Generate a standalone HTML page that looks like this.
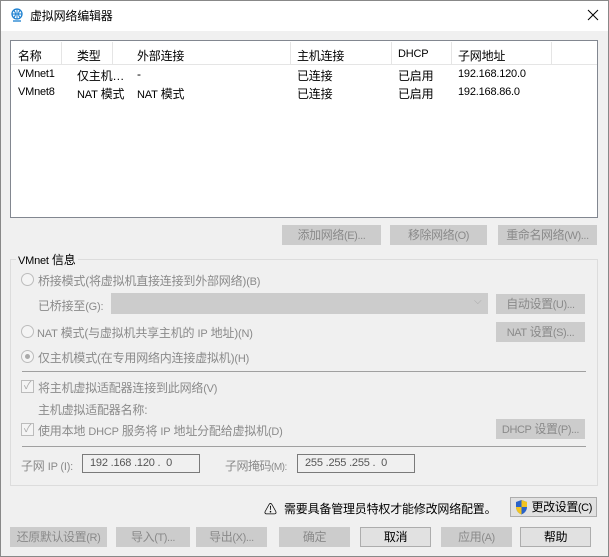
<!DOCTYPE html>
<html><head><meta charset="utf-8"><style>
*{box-sizing:border-box}
body{margin:0;width:609px;height:557px;overflow:hidden;background:#f0f0f0;font-family:"Liberation Sans","Noto Sans CJK SC",sans-serif;font-size:12px;color:#000;position:relative;letter-spacing:-0.2px}
.a{position:absolute;white-space:nowrap}
.win{position:absolute;left:0;top:0;width:609px;height:557px;border:1px solid #888}
.title{position:absolute;left:1px;top:1px;width:607px;height:30px;background:#fff}
.btn{position:absolute;height:20px;border:1px solid #ccc;background:#ccc;color:#8a8a8a;text-align:center;line-height:18px;white-space:nowrap;overflow:hidden;letter-spacing:-0.4px}
.btn.on{border:1px solid #adadad;background:#e1e1e1;color:#000}
.g{color:#8a8a8a}
.l{font-size:11px}
.radio{position:absolute;width:13px;height:13px;border:1px solid #bcbcbc;border-radius:50%;background:#f4f4f4}
.chk{position:absolute;width:13px;height:13px;border:1px solid #bcbcbc;background:#f4f4f4;color:#aaa;font-size:11px;line-height:11px;text-align:center}
</style></head><body>
<div class="win"></div>
<div class="title"></div>
<svg class="a" style="left:10px;top:8px" width="14" height="14" viewBox="0 0 14 14"><circle cx="7" cy="6" r="5" fill="none" stroke="#1a7fd0" stroke-width="1.3"/><path d="M2 6h10M7 1v10M4 2.5q3 3.5 0 7M10 2.5q-3 3.5 0 7" stroke="#1a7fd0" fill="none"/><path d="M3 13h8" stroke="#1a7fd0" stroke-width="1.3"/></svg>
<div class="a" style="left:30px;top:7px">虚拟网络编辑器</div>
<svg class="a" style="left:587px;top:9px" width="12" height="12" viewBox="0 0 12 12"><path d="M1 1L11 11M11 1L1 11" stroke="#000" stroke-width="1"/></svg>

<div class="a" style="left:10px;top:40px;width:588px;height:178px;background:#fff;border:1px solid #828790"></div>
<div class="a" style="left:11px;top:41px;width:586px;height:24px;border-bottom:1px solid #e5e5e5"></div>
<div class="a" style="left:61px;top:42px;width:1px;height:22px;background:#e5e5e5"></div>
<div class="a" style="left:112px;top:42px;width:1px;height:22px;background:#e5e5e5"></div>
<div class="a" style="left:290px;top:42px;width:1px;height:22px;background:#e5e5e5"></div>
<div class="a" style="left:391px;top:42px;width:1px;height:22px;background:#e5e5e5"></div>
<div class="a" style="left:451px;top:42px;width:1px;height:22px;background:#e5e5e5"></div>
<div class="a" style="left:551px;top:42px;width:1px;height:22px;background:#e5e5e5"></div>
<div class="a" style="left:18px;top:47px">名称</div><div class="a" style="left:77px;top:47px">类型</div><div class="a" style="left:137px;top:47px">外部连接</div><div class="a" style="left:297px;top:47px">主机连接</div><div class="a" style="left:398px;top:48px;font-size:11px">DHCP</div><div class="a" style="left:458px;top:47px">子网地址</div>
<div class="a" style="left:18px;top:68px;font-size:11px">VMnet1</div><div class="a" style="left:77px;top:67px">仅主机…</div><div class="a" style="left:137px;top:67px">-</div><div class="a" style="left:297px;top:67px">已连接</div><div class="a" style="left:398px;top:67px">已启用</div><div class="a" style="left:458px;top:68px;font-size:11px">192.168.120.0</div>
<div class="a" style="left:18px;top:86px;font-size:11px">VMnet8</div><div class="a" style="left:77px;top:85px"><span class="l">NAT</span> 模式</div><div class="a" style="left:137px;top:85px"><span class="l">NAT</span> 模式</div><div class="a" style="left:297px;top:85px">已连接</div><div class="a" style="left:398px;top:85px">已启用</div><div class="a" style="left:458px;top:86px;font-size:11px">192.168.86.0</div>

<div class="btn" style="left:282px;top:225px;width:99px">添加网络<span class="l">(E)...</span></div>
<div class="btn" style="left:390px;top:225px;width:97px">移除网络<span class="l">(O)</span></div>
<div class="btn" style="left:498px;top:225px;width:99px">重命名网络<span class="l">(W)...</span></div>

<div class="a" style="left:10px;top:259px;width:588px;height:227px;border:1px solid #dcdcdc"></div>
<div class="a" style="left:16px;top:251px;background:#f0f0f0;padding:0 2px"><span class="l">VMnet</span> 信息</div>
<div class="radio" style="left:21px;top:273px"></div><div class="a g" style="left:38px;top:272px">桥接模式(将虚拟机直接连接到外部网络)<span class="l">(B)</span></div>
<div class="a g" style="left:38px;top:297px">已桥接至<span class="l">(G):</span></div>
<div class="a" style="left:111px;top:293px;width:377px;height:21px;background:#ccc;border:1px solid #ccc"></div>
<div class="a" style="left:474px;top:296px;color:#aaa;font-size:10px">⌵</div>
<div class="btn" style="left:496px;top:294px;width:89px">自动设置<span class="l">(U)...</span></div>
<div class="radio" style="left:21px;top:325px"></div><div class="a g" style="left:37px;top:324px"><span class="l">NAT</span> 模式(与虚拟机共享主机的 <span class="l">IP</span> 地址)<span class="l">(N)</span></div>
<div class="btn" style="left:496px;top:322px;width:89px"><span class="l">NAT</span> 设置<span class="l">(S)...</span></div>
<div class="radio" style="left:21px;top:350px"></div><div class="a" style="left:25px;top:354px;width:5px;height:5px;border-radius:50%;background:#aaa"></div>
<div class="a g" style="left:38px;top:349px">仅主机模式(在专用网络内连接虚拟机)<span class="l">(H)</span></div>
<div class="a" style="left:22px;top:371px;width:564px;height:1px;background:#a0a0a0"></div>
<div class="chk" style="left:21px;top:380px">✓</div><div class="a g" style="left:38px;top:379px">将主机虚拟适配器连接到此网络<span class="l">(V)</span></div>
<div class="a g" style="left:38px;top:401px">主机虚拟适配器名称:</div>
<div class="chk" style="left:21px;top:423px">✓</div><div class="a g" style="left:38px;top:422px">使用本地 <span class="l">DHCP</span> 服务将 <span class="l">IP</span> 地址分配给虚拟机<span class="l">(D)</span></div>
<div class="btn" style="left:496px;top:419px;width:89px"><span class="l">DHCP</span> 设置<span class="l">(P)...</span></div>
<div class="a" style="left:22px;top:446px;width:564px;height:1px;background:#a0a0a0"></div>
<div class="a g" style="left:21px;top:457px">子网 <span class="l">IP (I):</span></div>
<div class="a l" style="left:82px;top:454px;width:118px;height:19px;border:1px solid #7a7a7a;padding-left:7px;line-height:17px;color:#555">192 .168 .120 .&nbsp; 0</div>
<div class="a g" style="left:225px;top:457px;letter-spacing:-0.5px">子网掩码<span style="font-size:10px">(M):</span></div>
<div class="a l" style="left:297px;top:454px;width:118px;height:19px;border:1px solid #7a7a7a;padding-left:7px;line-height:17px;color:#555">255 .255 .255 .&nbsp; 0</div>

<div class="a" style="left:264px;top:499px;font-size:13px">⚠</div>
<div class="a" style="left:284px;top:500px">需要具备管理员特权才能修改网络配置。</div>
<div class="btn on" style="left:510px;top:497px;width:87px;text-align:right;padding-right:4px">更改设置<span class="l">(C)</span></div>
<svg class="a" style="left:515px;top:499px" width="13" height="16" viewBox="0 0 13 16"><path d="M6.5 1L12 3v5q0 5-5.5 7.5Q1 13 1 8V3z" fill="#2a63c8"/><path d="M6.5 1L12 3v5H6.5zM6.5 8H1q0 5 5.5 7.5z" fill="#f2c420"/></svg>

<div class="btn" style="left:10px;top:527px;width:97px">还原默认设置<span class="l">(R)</span></div>
<div class="btn" style="left:116px;top:527px;width:74px">导入<span class="l">(T)...</span></div>
<div class="btn" style="left:196px;top:527px;width:71px">导出<span class="l">(X)...</span></div>
<div class="btn" style="left:279px;top:527px;width:71px">确定</div>
<div class="btn on" style="left:360px;top:527px;width:71px">取消</div>
<div class="btn" style="left:441px;top:527px;width:71px">应用<span class="l">(A)</span></div>
<div class="btn on" style="left:520px;top:527px;width:71px">帮助</div>
</body></html>
